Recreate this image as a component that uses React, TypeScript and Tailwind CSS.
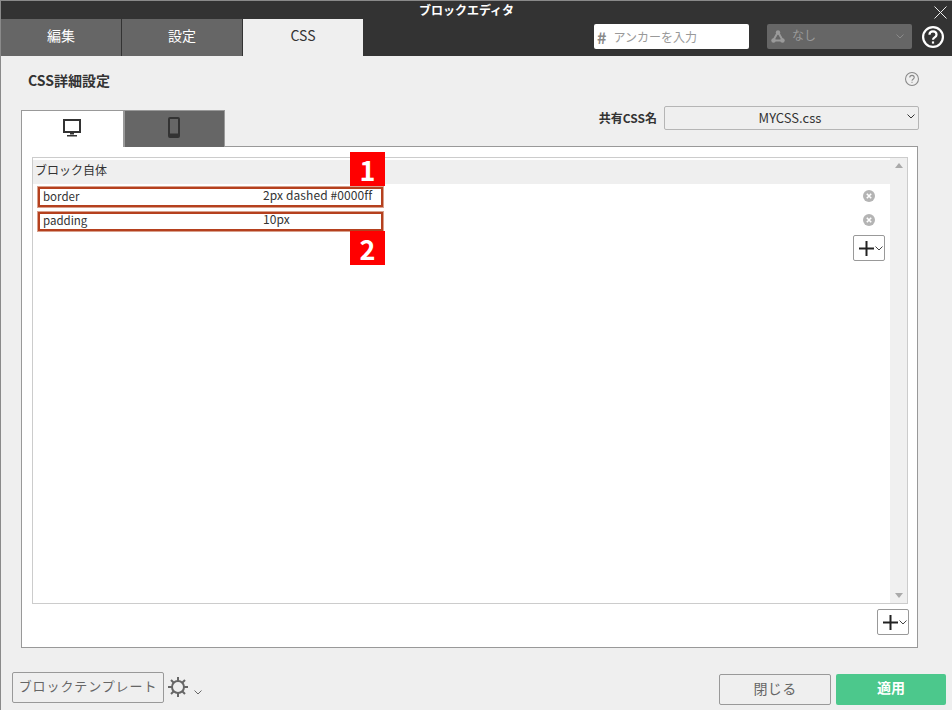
import React from "react";

const Chev = ({ c = "#555", cls = "" }: { c?: string; cls?: string }) => (
  <svg width="8" height="5" viewBox="0 0 8 5" className={cls}>
    <path d="M0.5 0.5 L4 4 L7.5 0.5" fill="none" stroke={c} strokeWidth="1" />
  </svg>
);

const Plus = () => (
  <div className="flex items-center h-[26px] w-[32px] border border-[#999] rounded-[2px] bg-white pl-[5px] gap-[1px]">
    <svg width="15" height="15" viewBox="0 0 15 15"><path d="M7.5 0V15M0 7.5H15" stroke="#222" strokeWidth="2" /></svg>
    <Chev c="#444" />
  </div>
);

const Del = () => (
  <svg width="12" height="12" viewBox="0 0 12 12">
    <circle cx="6" cy="6" r="6" fill="#b4b4b4" />
    <path d="M3.8 3.8L8.2 8.2M8.2 3.8L3.8 8.2" stroke="#fff" strokeWidth="1.6" />
  </svg>
);

const Help = ({ size, c, sw }: { size: number; c: string; sw: number }) => (
  <svg width={size} height={size} viewBox="0 0 20 20">
    <circle cx="10" cy="10" r={10 - sw / 2} fill="none" stroke={c} strokeWidth={sw} />
    <path d="M6.8 8C6.8 3.8 13.2 3.8 13.2 8C13.2 10.5 10 10.3 10 12.6" fill="none" stroke={c} strokeWidth={sw} />
    <rect x={10 - sw / 2} y="14" width={sw} height={sw} fill={c} />
  </svg>
);

const Row = ({ name, value, h }: { name: string; value: string; h: string }) => (
  <div className={`flex items-center ${h}`}>
    <span className="w-[230px] pl-[10px] text-[11.5px] -mt-[2px]">{name}</span>
    <span className="tracking-[0.1px] -mt-[5px]">{value}</span>
    <span className="ml-auto mr-[15px] flex -mt-[4px]"><Del /></span>
  </div>
);

const Tab = ({ label, active }: { label: string; active?: boolean }) => (
  <div className={`w-[120px] flex items-center justify-center text-[14px] pb-[4px] ${active ? "bg-[#efefef] text-[#333]" : "bg-[#666] text-white"}`}>
    {label}
  </div>
);

export default function App() {
  return (
    <div
      className="relative w-[952px] h-[710px] overflow-hidden flex flex-col bg-[#efefef] text-[#333] text-[12px] border-t border-l border-[#8a8a8a]"
      style={{ fontFamily: '"Noto Sans CJK JP", "Liberation Sans", sans-serif' }}
    >
      <header className="bg-[#333] h-[55px] shrink-0 flex flex-col">
        <div className="h-[18px] relative flex items-center justify-center pr-[20px] text-white text-[12px] font-bold">
          ブロックエディタ
          <svg width="13" height="13" viewBox="0 0 13 13" className="absolute right-[5px] top-[5px]">
            <path d="M0.5 0.5L12.5 12.5M12.5 0.5L0.5 12.5" stroke="#eee" strokeWidth="1" />
          </svg>
        </div>
        <div className="flex-1 flex">
          <div className="flex gap-[1px]">
            <Tab label="編集" />
            <Tab label="設定" />
            <Tab label="CSS" active />
          </div>
          <div className="ml-[231px] mt-[5px] w-[155px] h-[25px] bg-white rounded-[2px] flex items-center pl-[3px] gap-[7px] text-[#999]">
            <span className="text-[16px] font-bold text-[#888] leading-none">#</span>
            <span>アンカーを入力</span>
          </div>
          <div className="ml-[18px] mt-[5px] w-[145px] h-[25px] bg-[#666] rounded-[2px] flex items-center pl-[4px] text-[#999] relative">
            <svg width="14" height="13" viewBox="0 0 14 13">
              <path d="M7 2L2.5 10M7 2L11.5 10M2.5 10.5H11.5" stroke="#9a9a9a" strokeWidth="2" fill="none" />
              <circle cx="7" cy="2.5" r="2.2" fill="#9a9a9a" /><circle cx="2.5" cy="10.5" r="2.2" fill="#9a9a9a" /><circle cx="11.5" cy="10.5" r="2.2" fill="#9a9a9a" />
            </svg>
            <span className="ml-[7px] -mt-[3px]">なし</span>
            <Chev c="#8a8a8a" cls="ml-auto mr-[8px]" />
          </div>
          <div className="ml-[10px] mt-[7px]"><Help size={22} c="#fff" sw={2} /></div>
        </div>
      </header>

      <main className="flex-1 flex flex-col pl-[20px] pr-[34px] min-h-0">
        <div className="flex items-center justify-between h-[50px] pl-[7px] pb-[2px]">
          <h1 className="text-[14px] font-bold">CSS詳細設定</h1>
          <span className="flex mr-[-1px] -mt-[2px]"><Help size={14} c="#888" sw={1.5} /></span>
        </div>
        <div className="flex items-end justify-between h-[40px]">
          <div className="flex h-[37px] relative top-[1px]">
            <div className="w-[102px] bg-white border-l border-t border-[#999] flex items-center justify-center pb-[3px] pr-[2px]">
              <svg width="18" height="18" viewBox="0 0 18 18">
                <rect x="1" y="1" width="16" height="12" fill="#fff" stroke="#333" strokeWidth="2" />
                <path d="M7 13.5h4v2H7zM4 16h10v1.5H4z" fill="#333" />
              </svg>
            </div>
            <div className="w-[102px] bg-[#666] border-l-2 border-t border-r border-[#999] flex items-center justify-center pb-[3px] pr-[2px]">
              <svg width="12" height="21" viewBox="0 0 12 21">
                <rect x="1" y="1" width="10" height="19" rx="1" fill="none" stroke="#333" strokeWidth="2" />
                <rect x="1" y="16.5" width="10" height="3.5" fill="#333" />
              </svg>
            </div>
          </div>
          <div className="flex items-center gap-[7px] mb-[16px] -mr-[1px]">
            <span className="font-bold -mt-[1px]">共有CSS名</span>
            <div className="relative w-[255px] h-[24px] border border-[#b5b5b5] rounded-[2px] flex items-center justify-center text-[13px] pr-[3px]">
              MYCSS.css
              <Chev c="#333" cls="absolute right-[3px] top-[7px]" />
            </div>
          </div>
        </div>
        <section className="h-[502px] w-[897px] shrink-0 bg-white border border-[#999] pt-[10px] pl-[10px] pr-[8px] flex flex-col">
          <div className="h-[447px] w-[876px] shrink-0 border border-[#ccc] flex">
            <div className="flex-1 min-w-0 pt-[2px]">
              <div className="h-[24px] bg-[#efefef] flex items-center pl-[2px] pb-[5px]">ブロック自体</div>
              <Row name="border" value="2px dashed #0000ff" h="h-[25px] mt-[1px]" />
              <Row name="padding" value="10px" h="h-[23px]" />
              <div className="flex justify-end pr-[5px] pt-[2px]"><Plus /></div>
            </div>
            <div className="w-[17px] bg-[#f0f0f0] flex flex-col items-center justify-between py-[5px]">
              <span className="w-0 h-0 border-x-[4px] border-x-transparent border-b-[5px] border-b-[#aaa]" />
              <span className="w-0 h-0 border-x-[4px] border-x-transparent border-t-[5px] border-t-[#aaa]" />
            </div>
          </div>
          <div className="flex justify-end pt-[5px]"><Plus /></div>
        </section>
      </main>

      <footer className="h-[61px] shrink-0 flex items-start pl-[11px] pr-[6px] pt-[23px] relative">
        <div className="h-[31px] w-[152px] border border-[#999] rounded-[2px] flex items-center justify-center text-[#666] text-[13px] tracking-[0.9px] pb-[3px]">ブロックテンプレート</div>
        <svg width="20" height="20" viewBox="0 0 20 20" className="ml-[4px] mt-[5px]">
          <circle cx="10" cy="10" r="6" fill="none" stroke="#666" strokeWidth="2" />
          <path d="M10 0V4M10 16V20M0 10H4M16 10H20M3 3L5.5 5.5M14.5 14.5L17 17M17 3L14.5 5.5M5.5 14.5L3 17" stroke="#666" strokeWidth="2" />
        </svg>
        <Chev c="#666" cls="ml-[6px] mt-[18px]" />
        <div className="ml-auto mt-[2px] h-[31px] w-[112px] border border-[#999] rounded-[2px] flex items-center justify-center text-[#666] text-[14px] tracking-[0.3px] pb-[3px]">閉じる</div>
        <div className="ml-[5px] mt-[2px] h-[31px] w-[110px] bg-[#4cc88c] rounded-[2px] flex items-center justify-center text-white text-[14px] font-bold pb-[4px]">適用</div>
      </footer>

      {/* annotation overlays */}
      <div className="absolute left-[37px] top-[186px] w-[345px] h-[20px] border-2 border-[#b5401e] shadow-[0_0_0_1px_#d9a08c]" />
      <div className="absolute left-[37px] top-[211px] w-[345px] h-[19px] border-2 border-[#b5401e] shadow-[0_0_0_1px_#d9a08c]" />
      <div className="absolute left-[349px] top-[151px] w-[35px] h-[34px] bg-[#ff0000] text-white flex items-center justify-center text-[27px] font-bold leading-none">1</div>
      <div className="absolute left-[349px] top-[230px] w-[35px] h-[34px] bg-[#ff0000] text-white flex items-center justify-center text-[27px] font-bold leading-none">2</div>
    </div>
  );
}
